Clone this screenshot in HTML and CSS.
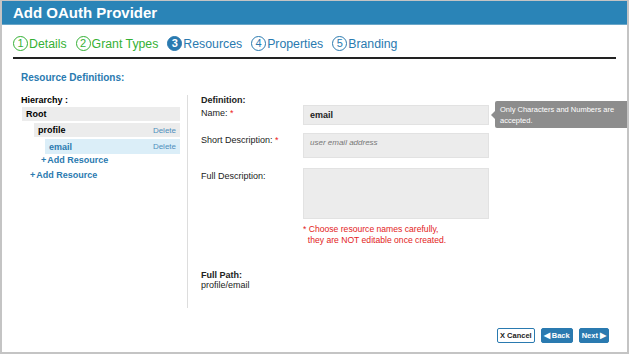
FILE: index.html
```html
<!DOCTYPE html>
<html lang="en">
<head>
    <meta charset="UTF-8">
    <title>Add OAuth Provider</title>
    <link rel="stylesheet" href="styles.css">
</head>
<body>

<div class="dialog">
    <div class="dialog-title">Add OAuth Provider</div>

    <div class="steps">
        <span class="step done"><span class="num">1</span>Details</span>
        <span class="step done"><span class="num">2</span>Grant Types</span>
        <span class="step current"><span class="num">3</span>Resources</span>
        <span class="step"><span class="num">4</span>Properties</span>
        <span class="step"><span class="num">5</span>Branding</span>
    </div>

    <div class="section-title">Resource Definitions:</div>

    <div class="panes">
        <div class="tree">
            <div class="tree-head">Hierarchy :</div>
            <div class="node lvl0"><span>Root</span></div>
            <div class="node lvl1"><span>profile</span><a class="del">Delete</a></div>
            <div class="node lvl2 selected"><span>email</span><a class="del">Delete</a></div>
            <a class="add lvl-add1"><b>+</b>Add Resource</a>
            <a class="add lvl-add0"><b>+</b>Add Resource</a>
        </div>

        <div class="definition">
            <div class="def-head">Definition:</div>

            <div class="field name-field">
                <label>Name: <i>*</i></label>
                <div class="input name-input">email</div>
                <div class="tip">Only Characters and Numbers are accepted.</div>
            </div>

            <div class="field short-field">
                <label>Short Description: <i>*</i></label>
                <div class="input short-input placeholder">user email address</div>
            </div>

            <div class="field full-field">
                <label>Full Description:</label>
                <div>
                    <div class="input full-input"></div>
                    <p class="warn">* Choose resource names carefully,<br>&nbsp;&nbsp;they are NOT editable once created.</p>
                </div>
            </div>

            <div class="path">
                <div class="def-head">Full Path:</div>
                <div>profile/email</div>
            </div>
        </div>
    </div>

    <div class="actions">
        <button class="btn cancel">X Cancel</button>
        <button class="btn blue">&#9664; Back</button>
        <button class="btn blue">Next &#9654;</button>
    </div>
</div>

</body>
</html>
```

FILE: styles.css
```css
body {
    margin: 0;
    font-family: "Liberation Sans", Arial, sans-serif;
    background-color: #fff;
}
.dialog {
    width: 625px;
    height: 351px;
    border: 2px solid #c4c4c4;
    border-top-width: 1px;
    position: relative;
    overflow: hidden;
}
.dialog-title {
    background-color: #2a84b7;
    border-bottom: 1px solid #6aa6c8;
    color: #fff;
    font-weight: bold;
    font-size: 15px;
    height: 23px;
    line-height: 23px;
    padding-left: 11px;
}
.steps {
    display: flex;
    gap: 9px;
    margin: 11px 11px 0 11px;
    padding-bottom: 6px;
    border-bottom: 2px solid #222;
    width: 603px;
    font-size: 12.3px;
}
.step {
    display: flex;
    align-items: center;
    color: #2a7ab0;
}
.step .num {
    width: 13px;
    height: 13px;
    border: 1.5px solid #2a7ab0;
    border-radius: 50%;
    font-size: 11px;
    line-height: 13px;
    text-align: center;
    margin-right: 1px;
}
.step.done {
    color: #35b135;
}
.step.done .num {
    border-color: #35b135;
}
.step.current .num {
    background-color: #2a7ab0;
    color: #fff;
    font-weight: bold;
}
.section-title {
    color: #2a7ab0;
    font-weight: bold;
    font-size: 10px;
    margin: 13px 0 0 19px;
}
.panes {
    display: flex;
    margin-top: 12px;
}
.tree {
    width: 160px;
    margin-left: 18px;
    padding-right: 7px;
    border-right: 1px solid #ddd;
    height: 213px;
    font-size: 9px;
}
.tree-head {
    font-weight: bold;
    font-size: 9px;
    margin: 0 0 2px 1px;
}
.node {
    display: flex;
    justify-content: space-between;
    align-items: center;
    background-color: #ececec;
    height: 14px;
    margin-bottom: 2px;
    font-weight: bold;
    font-size: 9px;
    padding: 0 4px;
}
.lvl0 {
    margin-left: 2px;
}
.lvl1 {
    margin-left: 14px;
}
.lvl2 {
    margin-left: 25px;
    height: 15px;
    margin-bottom: 0;
}
.node.selected {
    background-color: #dbeef8;
    color: #2a7ab0;
}
.del {
    color: #4f8fbd;
    font-weight: normal;
    font-size: 8px;
}
.add {
    display: block;
    color: #2a7ab0;
    font-weight: bold;
    font-size: 9px;
    height: 15px;
    line-height: 13px;
}
.add b {
    margin-right: 1px;
}
.lvl-add1 {
    margin-left: 21px;
}
.lvl-add0 {
    margin-left: 10px;
}
.definition {
    flex: 1;
    padding-left: 13px;
    font-size: 9px;
    color: #222;
}
.def-head {
    font-weight: bold;
    font-size: 9px;
}
.field {
    display: flex;
}
.field label {
    width: 102px;
}
.field label i {
    color: #e22;
    font-style: normal;
}
.input {
    width: 172px;
    background-color: #ececec;
    border: 1px solid #e2e2e2;
    padding: 0 6px;
}
.name-field label {
    padding-top: 3px;
}
.name-input {
    height: 18px;
    line-height: 18px;
    font-weight: bold;
}
.short-field {
    margin-top: 8px;
}
.short-field label {
    padding-top: 2px;
}
.short-input {
    padding-top: 4px;
    height: 19px;
}
.placeholder {
    font-style: italic;
    color: #777;
    font-size: 8px;
}
.full-field {
    margin-top: 10px;
}
.full-field label {
    padding-top: 3px;
}
.full-input {
    height: 49px;
}
.warn {
    color: #e32222;
    font-size: 8.6px;
    margin: 5px 0 0 0;
    line-height: 11px;
}
.tip {
    position: absolute;
    left: 493px;
    top: 100px;
    height: 27px;
    width: 134px;
    padding: 3px 0 0 5px;
    box-sizing: border-box;
    background-color: #8d8d8d;
    border-radius: 2px;
    color: #fff;
    font-size: 7.5px;
    line-height: 11px;
}
.tip::before {
    content: "";
    position: absolute;
    left: -4px;
    top: 10px;
    border-top: 4px solid transparent;
    border-bottom: 4px solid transparent;
    border-right: 4px solid #8d8d8d;
}
.path {
    margin-top: 24px;
}
.actions {
    position: absolute;
    right: 18px;
    bottom: 9px;
    display: flex;
    gap: 6px;
}
.btn {
    font-family: "Liberation Sans", Arial, sans-serif;
    font-size: 7.5px;
    font-weight: bold;
    height: 15px;
    padding: 0 2px;
    border-radius: 2px;
    cursor: pointer;
}
.cancel {
    background-color: #fff;
    border: 1px solid #2a7ab0;
    color: #222;
}
.blue {
    background-color: #2a7ab0;
    border: 1px solid #2a7ab0;
    color: #fff;
}
```
